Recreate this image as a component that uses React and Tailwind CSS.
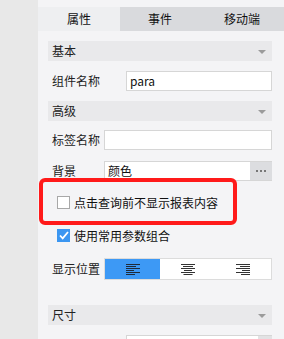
import React from 'react';

const font = { fontFamily: '"Noto Sans CJK SC", "Microsoft YaHei", sans-serif' };

const SectionHeader = ({ title, className = '' }) => (
  <div className={`flex items-center justify-between h-[20px] bg-[#e9e9eb] pl-[4px] pr-[6px] ${className}`}>
    <span className="text-[12px] leading-[20px] text-[#222]">{title}</span>
    <svg width="8" height="4" viewBox="0 0 8 4" className="mt-[2px]">
      <path d="M0 0h8L4 4z" fill="#9b9b9b" />
    </svg>
  </div>
);

// little align icons for the position switch
const AlignIcon = ({ mode, color }) => {
  const widths = [14, 10, 14, 8, 14, 9];
  return (
    <svg width="14" height="11" viewBox="0 0 14 11">
      {widths.map((w, i) => {
        let x = 0;
        if (mode === 'center') x = (14 - w) / 2;
        if (mode === 'right') x = 14 - w;
        return <rect key={i} x={x} y={i * 2} width={w} height="1" fill={color} />;
      })}
    </svg>
  );
};

export default function App() {
  return (
    <div className="flex w-[284px] h-[339px] overflow-hidden bg-[#f4f4f6]" style={font}>
      {/* left strip */}
      <div className="w-[38px] shrink-0 bg-[#e8e8e8]" />

      <div className="relative flex-1 pt-[7px]">
        {/* tabs */}
        <div className="flex h-[24px] text-[12px] text-[#111]">
          <div className="w-[82px] flex items-center justify-center bg-[#eeeff1]">属性</div>
          <div className="w-[80px] flex items-center justify-center bg-[#d9dadd]">事件</div>
          <div className="flex-1 flex items-center justify-center bg-[#d9dadd]">移动端</div>
        </div>

        <div className="pl-[10px] pr-[12px]">
          <SectionHeader title="基本" className="mt-[10px]" />

          <div className="flex items-center mt-[10px] h-[20px]">
            <span className="w-[78px] pl-[4px] text-[12px] text-[#222]">组件名称</span>
            <div className="flex-1 h-[20px] bg-white border border-[#d6d6d6] px-[3px] text-[12px] leading-[18px] text-[#111]">para</div>
          </div>

          <SectionHeader title="高级" className="mt-[10px]" />

          <div className="flex items-center mt-[9px] h-[20px]">
            <span className="w-[56px] pl-[4px] text-[12px] text-[#222]">标签名称</span>
            <div className="flex-1 h-[20px] bg-white border border-[#d6d6d6]" />
          </div>

          <div className="flex items-center mt-[11px] h-[20px]">
            <span className="w-[56px] pl-[4px] text-[12px] text-[#222]">背景</span>
            <div className="flex-1 flex h-[20px] bg-white border-y border-l border-[#d6d6d6]">
              <span className="flex-1 px-[3px] text-[12px] leading-[18px] text-[#111]">颜色</span>
              <span className="w-[22px] flex items-center justify-center gap-[2px] bg-[#dcdde0]">
                <i className="w-[2px] h-[2px] bg-[#777]" />
                <i className="w-[2px] h-[2px] bg-[#777]" />
                <i className="w-[2px] h-[2px] bg-[#777]" />
              </span>
            </div>
          </div>

          <div className="flex items-center mt-[15px] h-[13px] pl-[9px]">
            <span className="w-[13px] h-[13px] bg-white border border-[#a8a8a8]" />
            <span className="ml-[4px] text-[12px] leading-[13px] text-[#111]">点击查询前不显示报表内容</span>
          </div>

          <div className="flex items-center mt-[20px] h-[13px] pl-[9px]">
            <span className="w-[13px] h-[13px] flex items-center justify-center bg-[#3b96f1]">
              <svg width="10" height="9" viewBox="0 0 10 9">
                <path d="M1 4.5l2.7 2.8L9 1" stroke="white" strokeWidth="1.8" fill="none" />
              </svg>
            </span>
            <span className="ml-[4px] text-[12px] leading-[13px] text-[#111]">使用常用参数组合</span>
          </div>

          <div className="flex items-center mt-[16px] h-[22px]">
            <span className="w-[56px] pl-[4px] text-[12px] text-[#222]">显示位置</span>
            <div className="flex-1 flex h-[22px] border border-[#dcdcdc] bg-white">
              <div className="flex-1 flex items-center justify-center bg-[#3d99f5]">
                <AlignIcon mode="left" color="#1f2b3a" />
              </div>
              <div className="flex-1 flex items-center justify-center">
                <AlignIcon mode="center" color="#333" />
              </div>
              <div className="flex-1 flex items-center justify-center">
                <AlignIcon mode="right" color="#333" />
              </div>
            </div>
          </div>

          <SectionHeader title="尺寸" className="mt-[25px]" />

          <div className="flex items-start mt-[10px] h-[20px]">
            <span className="w-[78px] pl-[4px] text-[12px] leading-[20px] text-[#222]">控件高度</span>
            <div className="flex-1 flex h-[20px] bg-white border-t border-l border-[#d6d6d6]">
              <span className="flex-1" />
              <span className="w-[14px] bg-[#e2e2e4]" />
            </div>
          </div>
        </div>

        {/* red highlight box */}
        <div className="absolute left-[1px] top-[178px] w-[198px] h-[47px] border-[4px] border-[#ff1a1a] rounded-[6px]" />
      </div>
    </div>
  );
}
